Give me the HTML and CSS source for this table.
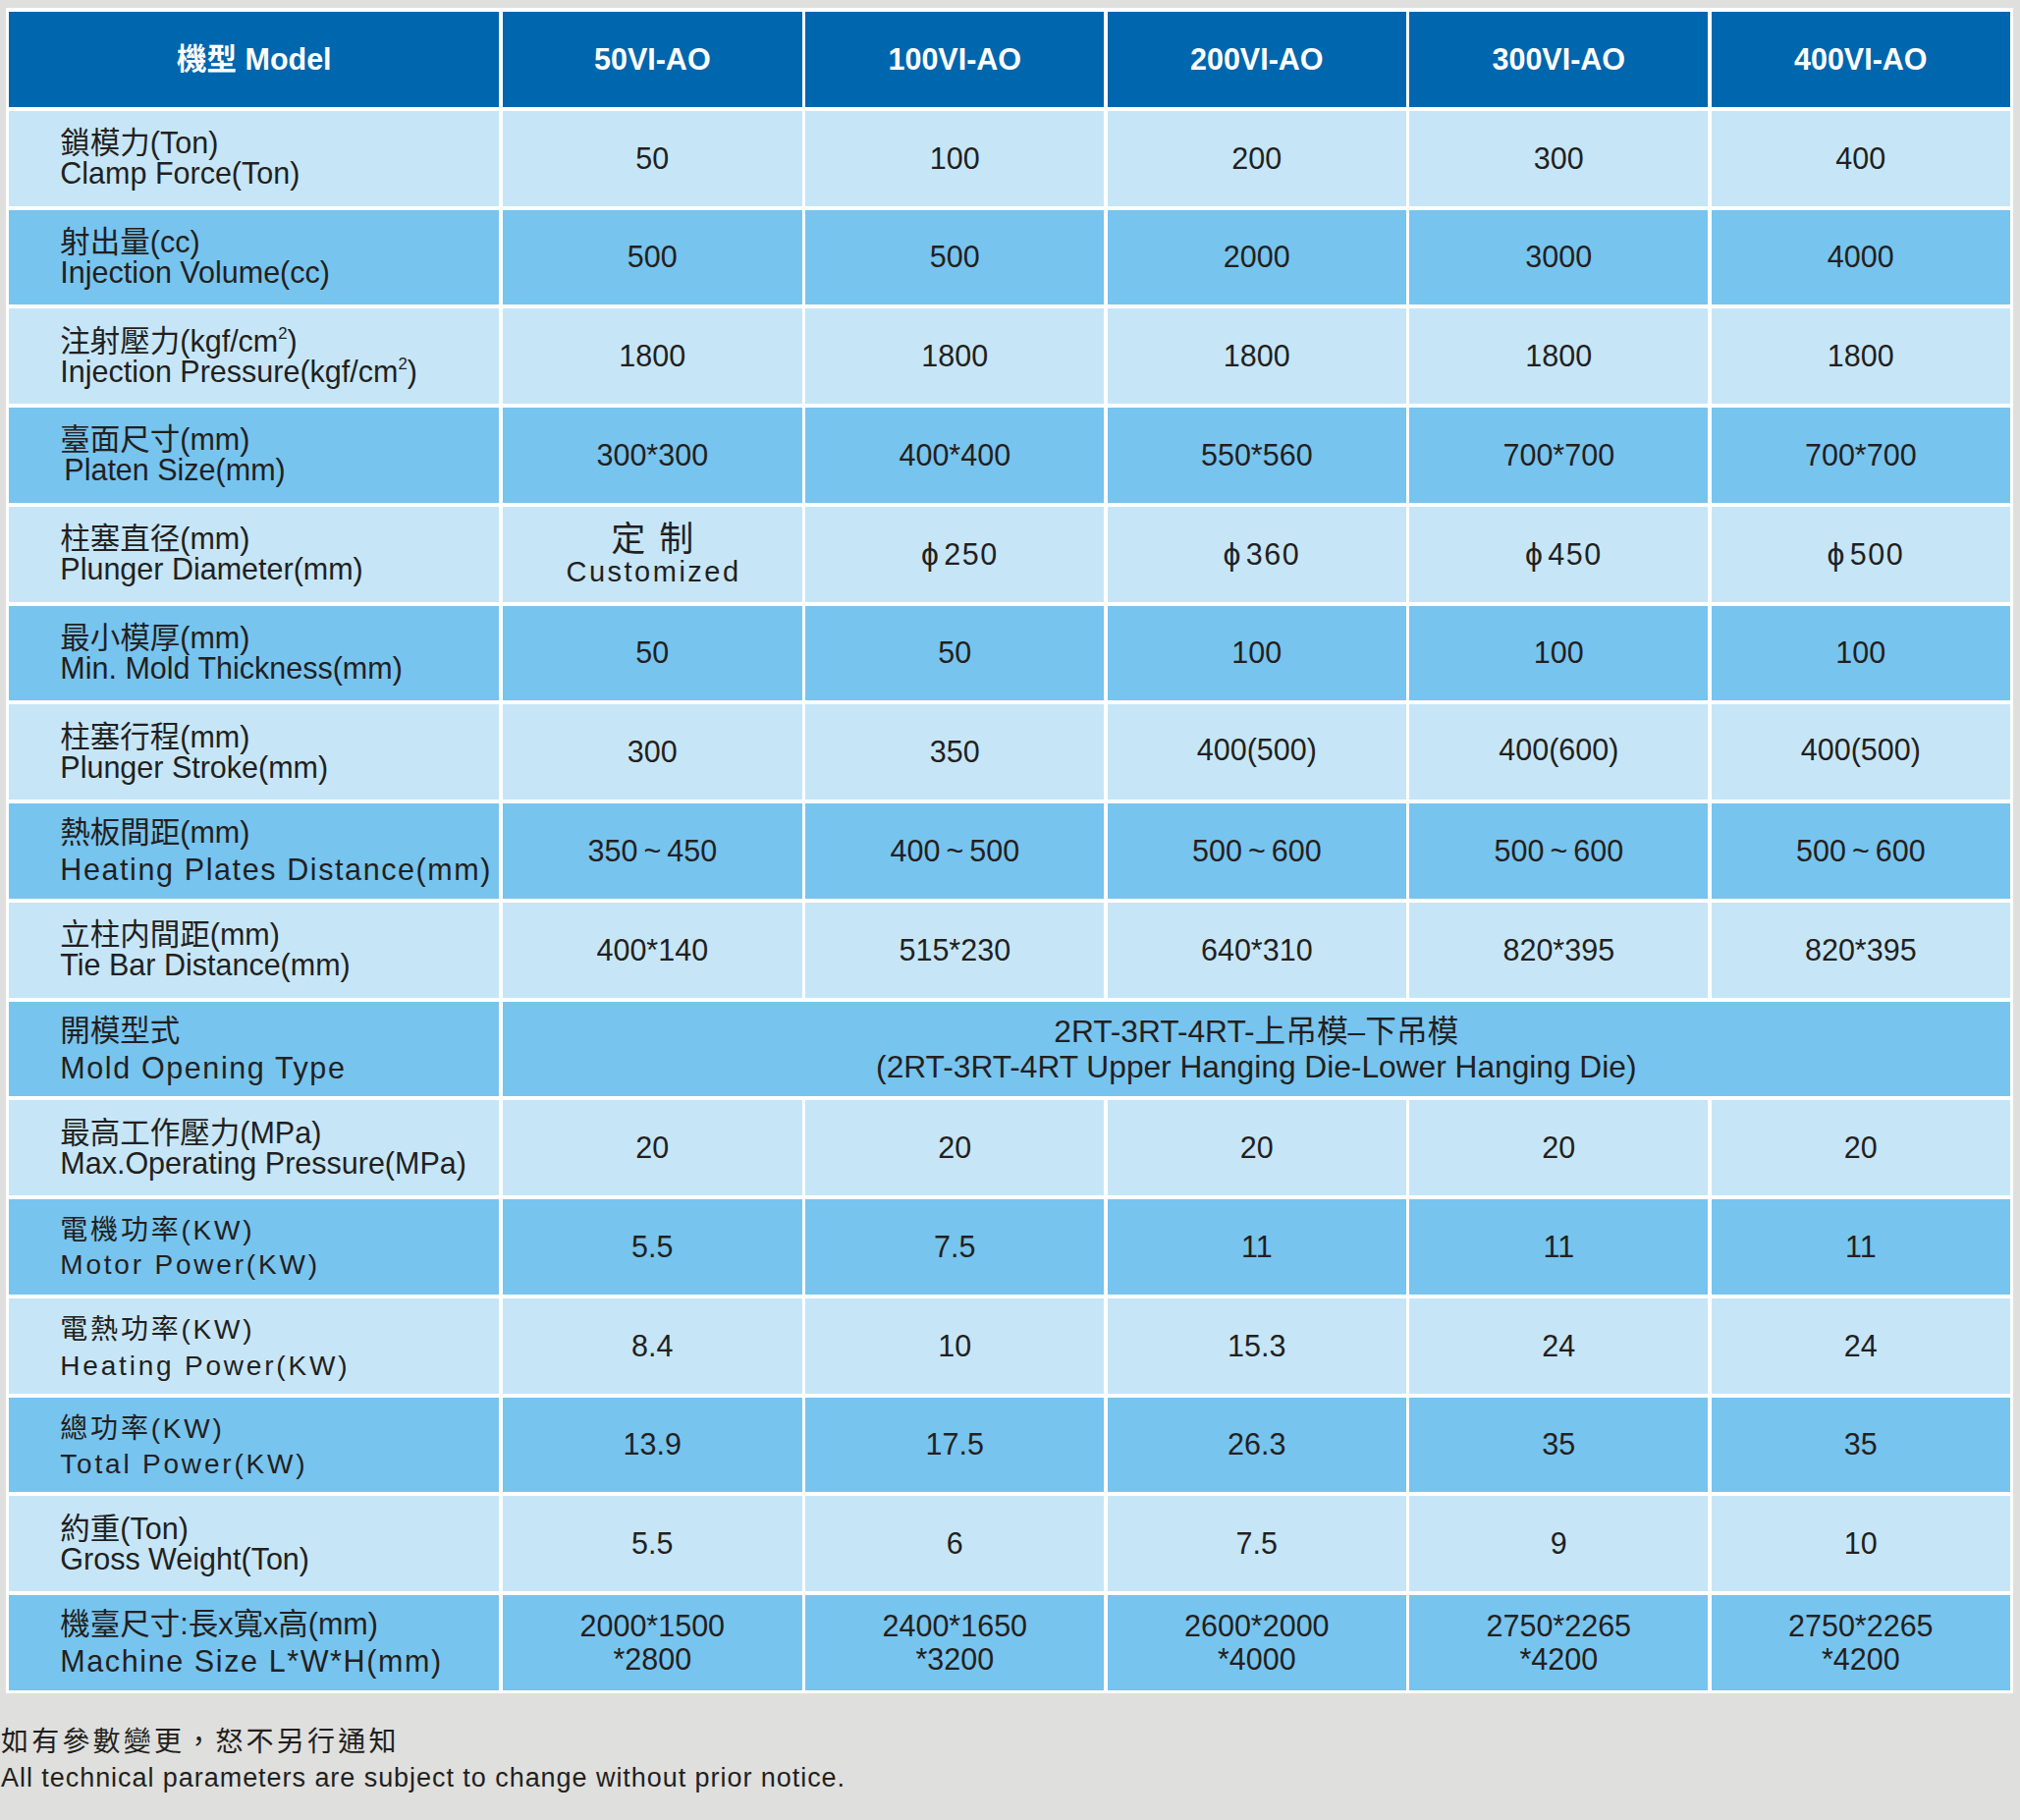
FILE: index.html
```html
<!DOCTYPE html>
<html lang="zh-Hant">
<head>
<meta charset="utf-8">
<title>規格表 Specifications</title>
<link rel="stylesheet" href="styles.css">
</head>
<body>
<main class="page">
  <section class="spec">
    <div class="row head">
      <div class="cell">機型 Model</div>
      <div class="cell">50VI-AO</div>
      <div class="cell">100VI-AO</div>
      <div class="cell">200VI-AO</div>
      <div class="cell">300VI-AO</div>
      <div class="cell">400VI-AO</div>
    </div>

    <div class="row light">
      <div class="cell label"><span>鎖模力(Ton)</span><span>Clamp Force(Ton)</span></div>
      <div class="cell">50</div>
      <div class="cell">100</div>
      <div class="cell">200</div>
      <div class="cell">300</div>
      <div class="cell">400</div>
    </div>

    <div class="row mid">
      <div class="cell label"><span>射出量(cc)</span><span>Injection Volume(cc)</span></div>
      <div class="cell">500</div>
      <div class="cell">500</div>
      <div class="cell">2000</div>
      <div class="cell">3000</div>
      <div class="cell">4000</div>
    </div>

    <div class="row light">
      <div class="cell label"><span>注射壓力(kgf/cm<sup>2</sup>)</span><span>Injection Pressure(kgf/cm<sup>2</sup>)</span></div>
      <div class="cell">1800</div>
      <div class="cell">1800</div>
      <div class="cell">1800</div>
      <div class="cell">1800</div>
      <div class="cell">1800</div>
    </div>

    <div class="row mid">
      <div class="cell label"><span>臺面尺寸(mm)</span><span class="indent">Platen Size(mm)</span></div>
      <div class="cell">300*300</div>
      <div class="cell">400*400</div>
      <div class="cell">550*560</div>
      <div class="cell">700*700</div>
      <div class="cell">700*700</div>
    </div>

    <div class="row light">
      <div class="cell label"><span>柱塞直径(mm)</span><span>Plunger Diameter(mm)</span></div>
      <div class="cell custom"><span class="zh-big">定制</span><span class="en-sp">Customized</span></div>
      <div class="cell phi"><span><span class="sym">ϕ</span>250</span></div>
      <div class="cell phi"><span><span class="sym">ϕ</span>360</span></div>
      <div class="cell phi"><span><span class="sym">ϕ</span>450</span></div>
      <div class="cell phi"><span><span class="sym">ϕ</span>500</span></div>
    </div>

    <div class="row mid">
      <div class="cell label"><span>最小模厚(mm)</span><span>Min. Mold Thickness(mm)</span></div>
      <div class="cell">50</div>
      <div class="cell">50</div>
      <div class="cell">100</div>
      <div class="cell">100</div>
      <div class="cell">100</div>
    </div>

    <div class="row light">
      <div class="cell label"><span>柱塞行程(mm)</span><span>Plunger Stroke(mm)</span></div>
      <div class="cell">300</div>
      <div class="cell">350</div>
      <div class="cell raise">400(500)</div>
      <div class="cell raise">400(600)</div>
      <div class="cell raise">400(500)</div>
    </div>

    <div class="row mid">
      <div class="cell label wide"><span>熱板間距(mm)</span><span class="sp">Heating Plates Distance(mm)</span></div>
      <div class="cell"><span>350<span class="tl">~</span>450</span></div>
      <div class="cell"><span>400<span class="tl">~</span>500</span></div>
      <div class="cell"><span>500<span class="tl">~</span>600</span></div>
      <div class="cell"><span>500<span class="tl">~</span>600</span></div>
      <div class="cell"><span>500<span class="tl">~</span>600</span></div>
    </div>

    <div class="row light">
      <div class="cell label"><span>立柱内間距(mm)</span><span>Tie Bar Distance(mm)</span></div>
      <div class="cell">400*140</div>
      <div class="cell">515*230</div>
      <div class="cell">640*310</div>
      <div class="cell">820*395</div>
      <div class="cell">820*395</div>
    </div>

    <div class="row mid">
      <div class="cell label wide"><span>開模型式</span><span class="sp">Mold Opening Type</span></div>
      <div class="cell span5 tall"><span>2RT-3RT-4RT-上吊模–下吊模</span><span>(2RT-3RT-4RT Upper Hanging Die-Lower Hanging Die)</span></div>
    </div>

    <div class="row light">
      <div class="cell label"><span>最高工作壓力(MPa)</span><span>Max.Operating Pressure(MPa)</span></div>
      <div class="cell">20</div>
      <div class="cell">20</div>
      <div class="cell">20</div>
      <div class="cell">20</div>
      <div class="cell">20</div>
    </div>

    <div class="row mid">
      <div class="cell label pw motor"><span>電機功率(KW)</span><span>Motor Power(KW)</span></div>
      <div class="cell">5.5</div>
      <div class="cell">7.5</div>
      <div class="cell">11</div>
      <div class="cell">11</div>
      <div class="cell">11</div>
    </div>

    <div class="row light">
      <div class="cell label pw"><span>電熱功率(KW)</span><span>Heating Power(KW)</span></div>
      <div class="cell">8.4</div>
      <div class="cell">10</div>
      <div class="cell">15.3</div>
      <div class="cell">24</div>
      <div class="cell">24</div>
    </div>

    <div class="row mid">
      <div class="cell label pw"><span>總功率(KW)</span><span>Total Power(KW)</span></div>
      <div class="cell">13.9</div>
      <div class="cell">17.5</div>
      <div class="cell">26.3</div>
      <div class="cell">35</div>
      <div class="cell">35</div>
    </div>

    <div class="row light">
      <div class="cell label"><span>約重(Ton)</span><span>Gross Weight(Ton)</span></div>
      <div class="cell">5.5</div>
      <div class="cell">6</div>
      <div class="cell">7.5</div>
      <div class="cell">9</div>
      <div class="cell">10</div>
    </div>

    <div class="row mid">
      <div class="cell label wide"><span>機臺尺寸:長x寬x高(mm)</span><span class="sp">Machine Size L*W*H(mm)</span></div>
      <div class="cell two"><span>2000*1500</span><span>*2800</span></div>
      <div class="cell two"><span>2400*1650</span><span>*3200</span></div>
      <div class="cell two"><span>2600*2000</span><span>*4000</span></div>
      <div class="cell two"><span>2750*2265</span><span>*4200</span></div>
      <div class="cell two"><span>2750*2265</span><span>*4200</span></div>
    </div>
  </section>

  <footer class="note">
    <p class="note-zh">如有參數變更，怒不另行通知</p>
    <p class="note-en">All technical parameters are subject to change without prior notice.</p>
  </footer>
</main>
</body>
</html>
```

FILE: styles.css
```css
html, body {
  margin: 0;
  padding: 0;
  background: #dfdfdd;
}

body {
  font-family: "Liberation Sans", "Noto Sans CJK TC", sans-serif;
  color: #231f20;
}

.page {
  width: 2057px;
  min-height: 1853px;
}

.spec {
  display: flex;
  flex-direction: column;
  gap: 4px;
  width: fit-content;
  margin: 8px 0 0 6px;
  padding: 4px 3.5px 3px 3.3px;
  background: #ffffff;
}

.row {
  display: grid;
  grid-template-columns: 499px 305px repeat(4, 304px);
  column-gap: 3.5px;
  height: 96.75px;
}

.cell {
  display: flex;
  flex-direction: column;
  align-items: center;
  justify-content: center;
  text-align: center;
  font-size: 30.5px;
  line-height: 31px;
  white-space: nowrap;
}

.head .cell {
  background: #0066ae;
  color: #ffffff;
  font-weight: 700;
  font-size: 30.5px;
}

.light .cell { background: #c6e6f8; }
.mid .cell { background: #77c4ef; }

.label {
  align-items: flex-start;
  text-align: left;
  padding-left: 52px;
}

.label .indent { padding-left: 4px; }

sup {
  font-size: 55%;
  line-height: 0;
  vertical-align: 0.8em;
}

.label.wide { line-height: 38px; }
.label.wide .sp { letter-spacing: 1.6px; }

.label.pw {
  font-size: 28px;
  letter-spacing: 2.8px;
  line-height: 36.7px;
  padding-top: 5px;
}
.label.pw.motor { line-height: 35px; padding-top: 2px; }

.custom .zh-big {
  font-size: 35px;
  line-height: 36px;
  letter-spacing: 14px;
  margin-right: -14px;
}
.custom .en-sp {
  font-size: 29px;
  letter-spacing: 2.5px;
  margin-right: -2.5px;
  line-height: 30px;
}

.phi { padding-left: 10px; letter-spacing: 1.5px; }
.phi .sym { margin-right: 4px; font-size: 32px; }

.tl { margin: 0 6px; }

.raise { padding-bottom: 4px; }

.span5 { grid-column: span 5; }
.tall { font-size: 31.7px; line-height: 36px; }

.two { line-height: 34px; }

.note {
  margin-top: 32.5px;
  padding-left: 1px;
}
.note p { margin: 0; }
.note-zh {
  font-size: 28px;
  letter-spacing: 3.2px;
  line-height: 36px;
}
.note-en {
  font-size: 27px;
  letter-spacing: 0.95px;
  line-height: 36px;
}
```
